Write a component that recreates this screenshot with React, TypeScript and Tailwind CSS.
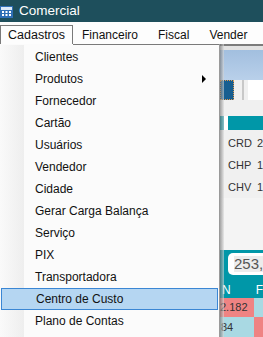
const items = [
  'Clientes',
  'Produtos',
  'Fornecedor',
  'Cartão',
  'Usuários',
  'Vendedor',
  'Cidade',
  'Gerar Carga Balança',
  'Serviço',
  'PIX',
  'Transportadora',
  'Centro de Custo',
  'Plano de Contas',
];

function AppIcon() {
  return (
    <svg width="13" height="13" viewBox="0 0 13 13" className="block">
      <rect x="0" y="1" width="13" height="12" fill="#2f6fb5" />
      <rect x="1" y="2" width="11" height="3" fill="#dbe9f7" />
      <rect x="2" y="6" width="2" height="2" fill="#fff" />
      <rect x="5.5" y="6" width="2" height="2" fill="#fff" />
      <rect x="9" y="6" width="2" height="2" fill="#fff" />
      <rect x="2" y="9" width="2" height="2" fill="#fff" />
      <rect x="5.5" y="9" width="2" height="2" fill="#fff" />
      <rect x="9" y="9" width="2" height="2" fill="#fff" />
    </svg>
  );
}

export default function App() {
  return (
    <div className="w-[263px] h-[337px] overflow-hidden bg-[#f0f0f0] text-[12px] font-['Liberation_Sans',Arial,sans-serif]">
      {/* Title bar */}
      <div className="h-[22px] bg-[#1e4f5c] flex items-center gap-[6px] text-white">
        <AppIcon />
        <span className="text-[13.5px]">Comercial</span>
      </div>

      {/* Menu bar */}
      <div className="h-[22px] bg-[#fdfdfd] flex items-end text-[#111]">
        <div className="h-[19px] w-[73px] border border-b-0 border-[#7a7a7a] bg-[#fdfdfd] flex items-center pl-[7px] text-[12.5px]">
          Cadastros
        </div>
        <div className="h-[19px] flex items-center pl-[9px] pr-[20px]">Financeiro</div>
        <div className="h-[19px] flex items-center pr-[20px]">Fiscal</div>
        <div className="h-[19px] flex items-center">Vender</div>
      </div>

      {/* Body */}
      <div className="relative h-[293px]">
        {/* App content behind the menu */}
        <div className="flex flex-col h-full pl-[220px]">
          <div className="h-[2px] bg-[#7c7c7c]" />
          <div className="h-[4px] bg-[#e3e3e3]" />
          <div className="h-[30px] bg-gradient-to-b from-[#a2bfdf] to-[#b9d0ea]" />
          <div className="h-[20px] flex bg-[#f0f0f0]">
            <div className="w-[14px] bg-[#175e90] border border-dotted border-[#e39a4d]" />
            <div className="w-[8px]" />
            <div className="w-[2px] bg-[#c8c8c8]" />
            <div className="w-[4px]" />
            <div className="flex-1 bg-white" />
          </div>
          <div className="h-[16px]" />
          <div className="h-[14px] flex">
            <div className="w-[4px] bg-[#0097a8]" />
            <div className="w-[4px] bg-white" />
            <div className="flex-1 bg-[#0097a8]" />
          </div>
          <div className="flex flex-col pt-[2px] pl-[8px] text-[11px] text-[#333]">
            {['CRD', 'CHP', 'CHV'].map((c, i) => (
              <div key={c} className="h-[22px] flex items-center">
                <span className="w-[29px]">{c}</span>
                <span>{i === 0 ? '2' : '1'}</span>
              </div>
            ))}
          </div>
          <div className="flex-1 bg-[#f4f4f4]" />
          <div className="h-[31px] bg-[#0097a8] flex items-start pl-[8px] pt-[3px]">
            <div className="h-[22px] flex-1 bg-white rounded-l-[5px] flex items-center pl-[6px] text-[15px] text-[#555]">
              <span className="bg-[#ececec] leading-[16px]">253,</span>
            </div>
          </div>
          <div className="h-[17px] bg-[#0097a8] flex items-center text-white text-[12px]">
            <span className="w-[37px] pl-[2px]">N</span>
            <span>F</span>
          </div>
          <div className="h-[19px] flex text-[11px] text-[#333]">
            <div className="w-[34px] bg-[#ef8383] flex items-center">2.182</div>
            <div className="flex-1 bg-[#a9d9e3]" />
          </div>
          <div className="h-[20px] flex text-[11px] text-[#333]">
            <div className="w-[34px] bg-[#a9d9e3] flex items-center pl-[1px]">84</div>
            <div className="flex-1 bg-[#ef8383]" />
          </div>
        </div>

        {/* Dropdown menu */}
        <div className="absolute left-0 top-0 w-[224px] h-full flex">
          <div className="w-[220px] h-full flex flex-col border-r border-[#9a9a9a] bg-[#fbfbfb]">
            <div className="h-px ml-[73px] bg-[#7a7a7a]" />
            <div className="relative flex-1 pt-[1px]">
              <div className="absolute left-0 top-0 bottom-0 w-[24px] bg-gradient-to-r from-[#fafafa] to-[#eeeeee]" />
              {items.map((it) => {
                const active = it === 'Centro de Custo';
                return (
                  <div
                    key={it}
                    className={
                      'relative h-[22px] mx-px flex items-center pl-[34px] pr-[8px] text-[#111] ' +
                      (active ? 'bg-[#b5d6f2] border border-[#3a86d4]' : '')
                    }
                  >
                    <span className="flex-1">{it}</span>
                    {it === 'Produtos' && (
                      <svg width="5" height="8" viewBox="0 0 5 8" className="mr-[3px]">
                        <path d="M0 0 L4 4 L0 8 Z" fill="#000" />
                      </svg>
                    )}
                  </div>
                );
              })}
            </div>
          </div>
          <div className="w-[4px] h-full bg-gradient-to-r from-[#6f6f6f] to-[#e0e0e0] opacity-60" />
        </div>
      </div>
    </div>
  );
}
